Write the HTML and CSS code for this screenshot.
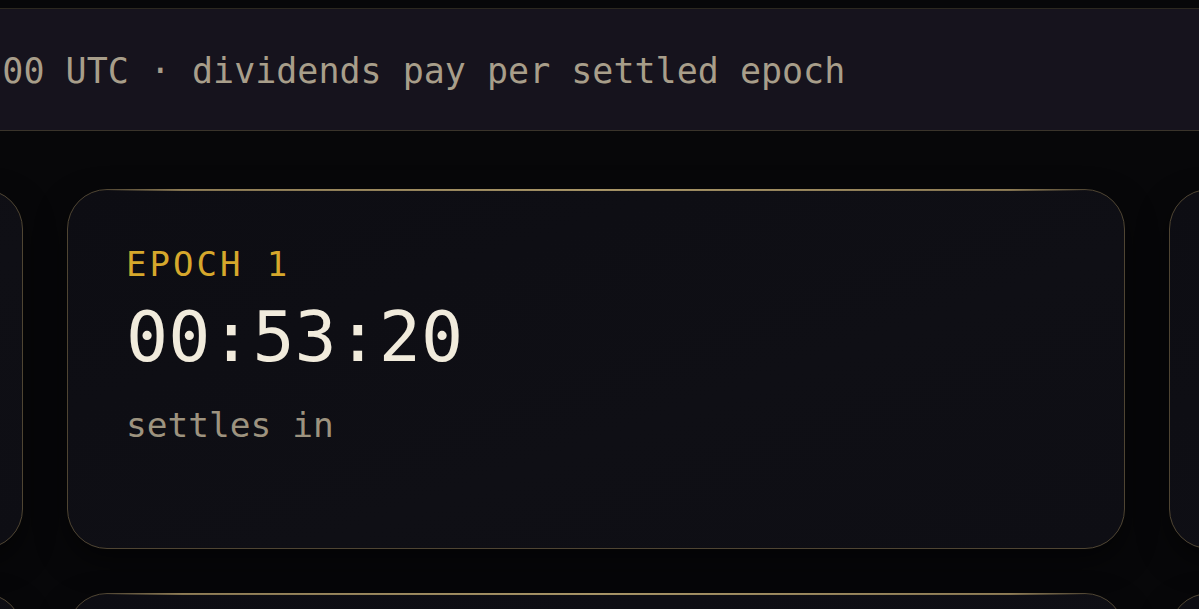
FILE: index.html
```html
<!DOCTYPE html>
<html lang="en">
<head>
    <meta charset="utf-8" />
    <title>Epochs</title>

    <link rel="stylesheet" href="styles.css">

</head>
<body>

    <header class="ticker">
        <span class="ticker-text">epochs close at 00:00 UTC · dividends pay per settled epoch</span>
    </header>

    <main class="board">

        <section class="row">
            <div class="card">
                <div class="card-label">EPOCH 0</div>
                <div class="card-time">00:00:00</div>
                <div class="card-note">settled</div>
            </div>
            <div class="card">
                <div class="card-label">EPOCH 1</div>
                <div class="card-time">00:53:20</div>
                <div class="card-note">settles in</div>
            </div>
            <div class="card">
                <div class="card-label">EPOCH 2</div>
                <div class="card-time">24:53:20</div>
                <div class="card-note">opens in</div>
            </div>
        </section>

        <section class="row">
            <div class="card">
                <div class="card-label">POOL</div>
                <div class="card-time">0.00</div>
                <div class="card-note">staked</div>
            </div>
            <div class="card">
                <div class="card-label">DIVIDEND</div>
                <div class="card-time">0.00</div>
                <div class="card-note">per share</div>
            </div>
            <div class="card">
                <div class="card-label">HOLDERS</div>
                <div class="card-time">0</div>
                <div class="card-note">wallets</div>
            </div>
        </section>

    </main>

</body>
</html>
```

FILE: styles.css
```css
html, body {
    margin: 0;
    overflow: hidden;
}

body {
    background: #070709;
    font-family: "DejaVu Sans Mono", "Liberation Mono", monospace;
}

/* ticker strip */
.ticker {
    margin-top: 8px;
    height: 121px;
    display: flex;
    align-items: center;
    background: #16131d;
    border-top: 1px solid #2c2820;
    border-bottom: 1px solid #3a342b;
    white-space: nowrap;
    overflow: hidden;
}

.ticker-text {
    margin-left: -398px;
    padding-top: 2px;
    font-size: 35px;
    line-height: 40px;
    color: #a89e8a;
}

/* cards */
.board {
    padding-top: 58px;
    display: flex;
    flex-direction: column;
    gap: 44px;
}

.row {
    display: flex;
    justify-content: center;
    gap: 44px;
    padding-right: 7px;
}

.card {
    position: relative;
    flex: 0 0 1058px;
    height: 360px;
    box-sizing: border-box;
    padding: 54px 58px 0;
    border: 1px solid #4f4533;
    border-radius: 40px;
    background: linear-gradient(160deg, #0d0d13 0%, #0f0f15 60%, #0e0e14 100%);
    box-shadow: 0 12px 30px rgba(0, 0, 0, 0.5);
}

.card::before {
    content: "";
    position: absolute;
    top: -1px;
    left: 36px;
    right: 36px;
    height: 2px;
    background: linear-gradient(90deg, rgba(150, 130, 90, 0) 0%, rgba(160, 140, 95, 0.8) 8%, rgba(180, 160, 110, 0.9) 50%, rgba(160, 140, 95, 0.8) 92%, rgba(150, 130, 90, 0) 100%);
}

.card-label {
    font-size: 34px;
    line-height: 40px;
    letter-spacing: 3px;
    color: #d6a82c;
}

.card-time {
    margin-top: 12px;
    font-size: 70px;
    line-height: 82px;
    color: #f1ebdc;
}

.card-note {
    margin-top: 27px;
    font-size: 34.5px;
    line-height: 40px;
    color: #9d937f;
}
```
